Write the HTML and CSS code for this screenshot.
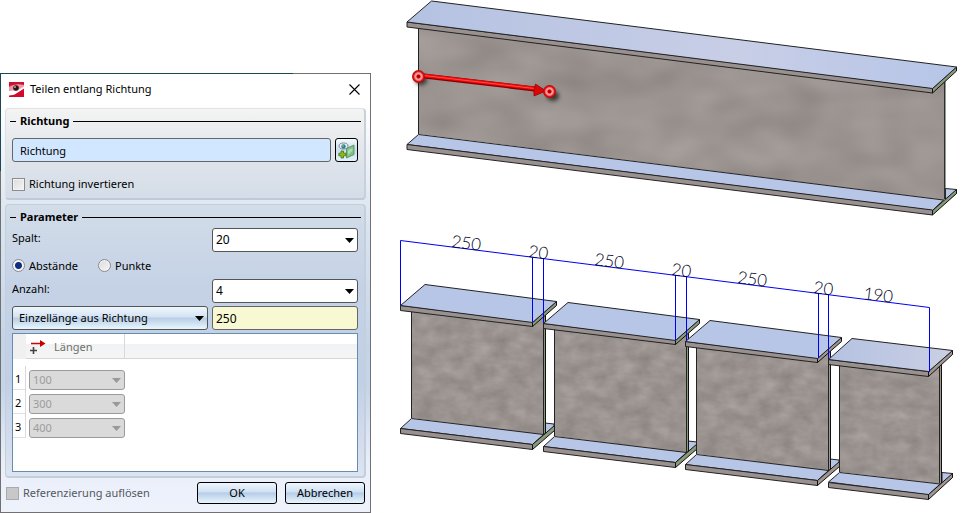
FILE: index.html
```html
<!DOCTYPE html>
<html lang="de">
<head>
<meta charset="utf-8">
<title>Teilen entlang Richtung</title>
<link rel="stylesheet" href="styles.css">
</head>
<body>
<main class="page">
  <form class="dialog" aria-labelledby="dialog-title">
    <header class="titlebar">
      <svg class="app-icon" viewBox="0 0 15 15" aria-hidden="true">
        <rect width="15" height="15" fill="#e03a52"/>
        <path d="M0 0H15V4Q8 1 0 4Z" fill="#cf1030"/>
        <path d="M0 5Q6 1 15 3V5L6 10 0 12Z" fill="#e99aa3"/>
        <path d="M0 9Q4 8 7 9L15 4.500V6.500L5 13 0 13.500Z" fill="#fff"/>
        <path d="M0 14L6 12.500 15 7V15H0Z" fill="#d4082c"/>
        <circle cx="7" cy="6" r="2.800" fill="#2b1517"/>
        <circle cx="6" cy="5" r="1" fill="#aaa"/>
      </svg>
      <h1 class="title" id="dialog-title">Teilen entlang Richtung</h1>
      <button class="close" type="button" aria-label="Schließen">
        <svg viewBox="0 0 11 11" aria-hidden="true"><path d="M.5.5l10 10M10.500.5l-10 10" fill="none" stroke="#000" stroke-width="1.100"/></svg>
      </button>
    </header>

    <div class="content">
      <section class="group group-direction">
        <h2 class="legend">Richtung</h2>
        <div class="row pick-row">
          <input class="field field-blue" type="text" value="Richtung" aria-label="Richtung" readonly>
          <button class="pick" type="button" aria-label="Richtung wählen">
            <svg viewBox="0 0 17 17" aria-hidden="true">
              <ellipse cx="5.500" cy="4" rx="4.500" ry="3" fill="#eaf1f5" stroke="#7d8a90"/>
              <circle cx="5.500" cy="4.500" r="2.200" fill="#2d7c9c"/>
              <circle cx="5" cy="4" r="1" fill="#66b579"/>
              <path d="M8.500 6.500L16 3v9.500l-7.500 3.500z" fill="#7fc086" stroke="#4c8e57" stroke-width=".8"/>
              <path d="M10 8l4.500-2v3L10 13z" fill="#addbae"/>
              <path d="M3 9h2.500v2.200H8v2.600H5.500V16H3v-2.200H.8v-2.600H3z" fill="#8dbb1c" stroke="#477315" stroke-width=".8"/>
            </svg>
          </button>
        </div>
        <label class="option"><input class="check" type="checkbox">Richtung invertieren</label>
      </section>

      <section class="group group-params">
        <h2 class="legend">Parameter</h2>
        <div class="grid">
          <label class="caption" for="gap">Spalt:</label>
          <span class="combo"><select id="gap"><option>20</option></select></span>
          <div class="radios">
            <label class="option"><input class="radio" type="radio" name="mode" checked>Abstände</label>
            <label class="option"><input class="radio" type="radio" name="mode">Punkte</label>
          </div>
          <label class="caption" for="count">Anzahl:</label>
          <span class="combo"><select id="count"><option>4</option></select></span>
        </div>
        <div class="grid">
          <span class="combo combo-blue"><select aria-label="Längenart"><option>Einzellänge aus Richtung</option></select></span>
          <input class="field field-yellow" type="text" value="250" aria-label="Einzellänge">
        </div>
        <div class="table-box">
          <table class="lengths">
            <thead>
              <tr>
                <td class="corner"></td>
                <th class="head" scope="col"><span class="head-inner">
                  <svg viewBox="0 0 16 14" aria-hidden="true"><path d="M1 3.500h10" stroke="#d60000" stroke-width="1.500"/><path d="M10 0l5.500 3.500L10 7z" fill="#c40000"/><path d="M0 10.500h7M3.500 7v7" stroke="#444" stroke-width="1.600"/></svg>
                  Längen</span></th>
                <td class="filler"></td>
              </tr>
            </thead>
            <tbody>
              <tr><th class="num" scope="row">1</th><td class="cell"><span class="combo combo-off"><select aria-label="Länge 1" disabled><option>100</option></select></span></td><td></td></tr>
              <tr><th class="num" scope="row">2</th><td class="cell"><span class="combo combo-off"><select aria-label="Länge 2" disabled><option>300</option></select></span></td><td></td></tr>
              <tr><th class="num" scope="row">3</th><td class="cell"><span class="combo combo-off"><select aria-label="Länge 3" disabled><option>400</option></select></span></td><td></td></tr>
            </tbody>
          </table>
        </div>
      </section>

      <footer class="footer">
        <label class="option option-off"><input class="check" type="checkbox" disabled>Referenzierung auflösen</label>
        <button class="action" type="submit">OK</button>
        <button class="action" type="button">Abbrechen</button>
      </footer>
    </div>
  </form>

  <svg class="drawing" viewBox="371 0 591 513" role="img" aria-label="Träger vor und nach dem Teilen">
    <defs>
      <filter id="rough" x="0" y="0" width="1" height="1" color-interpolation-filters="sRGB">
        <feTurbulence type="fractalNoise" baseFrequency=".018 .03" numOctaves="2" seed="8"/>
        <feColorMatrix values=".14 0 0 0 .536  .14 0 0 0 .505  .14 0 0 0 .49  0 0 0 0 1"/>
        <feComposite in2="SourceGraphic" operator="in"/>
      </filter>
      <filter id="grain" x="0" y="0" width="1" height="1" color-interpolation-filters="sRGB">
        <feTurbulence type="fractalNoise" baseFrequency=".055 .09" numOctaves="3" seed="3"/>
        <feColorMatrix values=".15 0 0 0 .53  .15 0 0 0 .5  .15 0 0 0 .485  0 0 0 0 1"/>
        <feComposite in2="SourceGraphic" operator="in"/>
      </filter>
      <linearGradient id="sheen"><stop offset="0" stop-color="#b4c2e2"/><stop offset=".6" stop-color="#c8cee6"/><stop offset="1" stop-color="#b6c5e8"/></linearGradient>
      <linearGradient id="sheen-end"><stop offset="0" stop-color="#b4c2e2"/><stop offset="1" stop-color="#cacfe3"/></linearGradient>
      <radialGradient id="ball"><stop offset="0" stop-color="#900"/><stop offset=".25" stop-color="#c00"/><stop offset=".4" stop-color="#ffb0b0"/><stop offset=".6" stop-color="#f77"/><stop offset=".75" stop-color="#e01515"/><stop offset="1" stop-color="#a80808"/></radialGradient>
      <filter id="shade" x="-1" y="-1" width="3" height="3"><feGaussianBlur stdDeviation="2"/></filter>
      <g id="segment">
        <path class="blue" d="M545 423l9 1v4l-9 8z"/>
        <path class="end" d="M543.500 308h2v125l-2 2z"/>
        <path filter="url(#grain)" d="M411 308l132 2V435l-132-17z"/>
        <path class="line" d="M411.500 311V418M543.500 317V434"/>
        <path class="blue" d="M411.500 418.500l132 16-11 10-132-16z"/>
        <path class="steel" d="M400.500 428.500v5l132 16v-5z"/>
        <path class="end" d="M532.500 444.500l22-19v5l-22 19z"/>
        <path class="steel" d="M400.500 305.500v5l132 16v-5z"/>
        <path class="end" d="M532.500 322.500l24-21v4l-24 21z"/>
        <path class="blue" d="M425 284.500l131.500 17-24 21-132-17z"/>
      </g>
    </defs>

    <g class="long-beam">
      <path class="blue" d="M945.500 188.500l11 1v4l-11 8z"/>
      <path class="web-edge" d="M944.500 76V199"/>
      <path filter="url(#rough)" d="M418 26l526 50V200l-526-66z"/>
      <path class="line" d="M418.500 28V134"/>
      <path class="blue" d="M418.500 134.500l525 65.500-11 10.500-525.500-66z"/>
      <path class="steel" d="M407 144.500v5l525.500 65.500v-5z"/>
      <path class="end" d="M932.500 210.500l24-21v4l-24 21.500z"/>
      <path class="steel" d="M407 22v5l525.500 66v-5z"/>
      <path class="end" d="M932.500 88.500l24-21.500v4l-24 22z"/>
      <path class="blue sheen" d="M431.500 1l525 66-24 21.500-525.500-66.500z"/>
    </g>

    <g>
      <ellipse cx="421" cy="80" rx="6" ry="5" opacity=".65" filter="url(#shade)"/>
      <ellipse cx="553" cy="96" rx="6" ry="5" opacity=".65" filter="url(#shade)"/>
      <path d="M424 76l115 13.500" stroke="#850000" stroke-width="5"/>
      <path d="M424 75.500l115 13.500" stroke="#f00606" stroke-width="3.500"/>
      <path d="M424 75.500l115 13.500" stroke="#ff4d4d" stroke-width="1"/>
      <path d="M535.500 84L546 91l-12 5q-1-6 1.500-12z" fill="#df0505" stroke="#8a0000" stroke-width=".7"/>
      <circle cx="418.500" cy="76.500" r="6.500" fill="url(#ball)"/>
      <circle cx="549.500" cy="91.500" r="6.500" fill="url(#ball)"/>
    </g>

    <use class="cut-green" href="#segment"/>
    <use class="cut-green" href="#segment" x="143" y="18"/>
    <use class="cut-steel" href="#segment" x="285" y="36"/>
    <g class="cut-steel">
      <path class="blue" d="M942 472.500l10.500 1v4l-10.500 8z"/>
      <path class="end" d="M939.500 360h2v123l-2 2z"/>
      <path filter="url(#grain)" d="M839 362h101V484l-101-12z"/>
      <path class="line" d="M839.500 365V472M939.500 366V483"/>
      <path class="blue" d="M839.500 472.500l100.500 11.500-11.500 11-100-13z"/>
      <path class="steel" d="M828.500 482.500v5l100 12v-5z"/>
      <path class="end" d="M928.500 494.500l24-21v4l-24 22z"/>
      <path class="steel" d="M828.500 359.500v5l100 12v-5z"/>
      <path class="end" d="M928.500 371.500l24-21v4l-24 22z"/>
      <path class="blue sheen-end" d="M852 338.500l100.500 12-24 21-100-12z"/>
    </g>

    <path class="dim" d="M400.500 305V240.500L929.500 307.500V372M532.500 322V257.500M543.500 323V258.500M675.500 340V275.500M686.500 341V276.500M818.500 358V293.500M828.500 359V294.500"/>
    <g class="numbers">
      <text transform="translate(451 247) rotate(7)">250</text>
      <text transform="translate(528 257) rotate(7)">20</text>
      <text transform="translate(594 265) rotate(7)">250</text>
      <text transform="translate(671 275) rotate(7)">20</text>
      <text transform="translate(737 283) rotate(7)">250</text>
      <text transform="translate(813 293) rotate(7)">20</text>
      <text transform="translate(863 299) rotate(7)">190</text>
    </g>
  </svg>
</main>
</body>
</html>
```
FILE: styles.css
```css
* { box-sizing: border-box; }

body {
  margin: 0;
  background: #fff;
  color: #000;
  font: 11px/16px "Noto Sans", "Open Sans", sans-serif;
}

button, input, select { font: inherit; color: inherit; margin: 0; }

.page {
  display: grid;
  grid-template-columns: 371px minmax(0, 1fr);
  align-items: start;
}

.drawing { display: block; width: 100%; height: auto; }

/* Dialog frame */
.dialog {
  margin-top: 73px;
  padding: 1px;
  background:
    linear-gradient(90deg, #1d4757 293px, #707070 293px) top / 100% 1px no-repeat,
    linear-gradient(#1d4757 98px, #707070 98px) left / 1px 100% no-repeat,
    #737073;
}

.titlebar {
  display: flex;
  align-items: center;
  height: 30px;
  padding: 0 10px 0 8px;
  background: #fff;
}

.app-icon { width: 15px; height: 15px; }

.title { flex: 1; margin: 0 0 0 6px; font-size: 11px; font-weight: 400; }

.close { display: grid; padding: 0; border: 0; background: none; }
.close svg { width: 11px; height: 11px; }

.content {
  padding: 4px 4px 8px;
  background: linear-gradient(#fff, #dce7f2 26%, #c3d3e8 60%, #c5d5ea 70%, #e9effa 88%, #eef2fb);
}

/* Groups */
.group {
  padding: 4px 6px;
  border: 1px solid #c5cedb;
  border-right-width: 2px;
  border-bottom-width: 2px;
  border-radius: 4px;
}

.group-direction {
  margin-bottom: 4px;
  padding-bottom: 6px;
  border-color: #dfe3e5 #c8d0da #c0cad6 #dce1e5;
  background: linear-gradient(#f3f4f3, #e3e6ec 45%, #d4dde8);
}

.group-params {
  background: linear-gradient(#d2dde8, #c5d2e6 30%, #c1d0e6 65%, #dde4f1);
}

.legend {
  display: flex;
  align-items: center;
  gap: 4px;
  margin: 0 -3px 0 -2px;
  font-size: 11px;
  line-height: 16px;
}
.legend::before, .legend::after { content: ""; height: 1px; background: #000; }
.legend::before { width: 6px; }
.legend::after { flex: 1; }

.row { display: flex; gap: 4px; }
.pick-row { margin: 9px 0 14px; }

.field {
  flex: 1;
  width: 100%;
  min-width: 0;
  height: 24px;
  padding: 0 3px;
  border: 1px solid #666;
  border-radius: 3px;
}
.field-blue { padding-left: 7px; background: #d1e7ff; }
.field-yellow { background: #f8f9d2; font-size: 12px; }

.pick {
  display: grid;
  place-items: center;
  width: 23px;
  height: 24px;
  padding: 0;
  border: 1px solid #000;
  border-radius: 3px;
  background: linear-gradient(#f4f9fd, #c9dcf0 50%, #e5f2fb);
}
.pick svg { width: 17px; height: 17px; }

.option { display: flex; align-items: center; gap: 4px; }

.check, .radio {
  appearance: none;
  flex: none;
  width: 13px;
  height: 13px;
  border: 1px solid #8c8c8c;
  background: linear-gradient(135deg, #dcdcdc, #f5f5f5);
  box-shadow: inset 0 0 0 1px #f3f3f3;
}
.radio { border-radius: 50%; }
.radio:checked { background: radial-gradient(circle, #112d80 3px, #f4f4f4 4px); }
.check:disabled { border-color: #aaa; background: #c8c8c8; box-shadow: none; }

/* Parameter form */
.grid {
  display: grid;
  grid-template-columns: minmax(0, 1fr) 146px;
  column-gap: 4px;
  align-items: center;
  margin: 3px 0;
}

.caption { align-self: start; padding-top: 2px; }
.radios { grid-column: 1 / -1; display: flex; gap: 20px; height: 27px; align-items: center; }

.combo { position: relative; display: block; }
.combo select {
  appearance: none;
  display: block;
  width: 100%;
  height: 24px;
  padding: 0 20px 0 3px;
  border: 1px solid #555;
  border-radius: 3px;
  background: #fff;
  font-size: 12px;
}
.combo::after {
  content: "";
  position: absolute;
  top: calc(50% - 2px);
  right: 4px;
  width: 9px;
  height: 5px;
  background: #000;
  clip-path: polygon(0 0, 100% 0, 50% 100%);
  pointer-events: none;
}
.combo-blue select {
  padding-left: 6px;
  background: linear-gradient(#eff7fd, #d3e2f2 46%, #b7cce6 50%, #e8f8fd);
  font-size: 11px;
}
.combo-off select {
  height: 20px;
  border-color: #9b9b9b;
  background: #dadada;
  color: #9c9c9c;
  font-size: 11px;
  opacity: 1;
}
.combo-off::after { background: #999; }

/* Lengths table */
.table-box {
  min-height: 139px;
  border: 1px solid #688caf;
  background: #fff;
}
.lengths { width: 100%; border-collapse: separate; border-spacing: 0; table-layout: fixed; }
.lengths td, .lengths th { padding: 0; font-weight: 400; text-align: left; }
.lengths thead td, .lengths thead th {
  height: 25px;
  border-bottom: 1px solid #d5d5d5;
  background: linear-gradient(#fff 40%, #f1f2f3 42%, #f5f5f6);
}
.lengths .corner { width: 13px; background: #f0f0f0; border-color: #f0f0f0; }
.lengths .head { width: 99px; border-right: 1px solid #d9d9d9; }
.head-inner { display: flex; align-items: center; gap: 8px; padding: 2px 0 0 4px; color: #6f716c; }
.head-inner svg { width: 16px; height: 14px; }
.lengths tbody::before { content: ""; display: block; height: 7px; }
.lengths .num {
  height: 24px;
  border-right: 1px solid #d9d9d9;
  border-bottom: 1px solid #e2e2e2;
  padding: 2px 0 0 2px;
}
.cell .combo { margin: 4px 0 0 3px; }

/* Footer */
.footer { display: flex; align-items: center; gap: 8px; padding: 4px 1px 0 1px; }
.footer .option { flex: 1; }
.option-off { color: #55585e; }
.action {
  width: 80px;
  height: 22px;
  padding: 0;
  border: 1px solid #000;
  border-radius: 3px;
  background: linear-gradient(#eef6fd, #d0e1f3 44%, #b6cce7 50%, #e8f7fd);
}

/* Model drawing */
.drawing path { stroke-linejoin: round; }
.blue { fill: #b7c5e6; stroke: #222; }
.sheen { fill: url(#sheen); }
.sheen-end { fill: url(#sheen-end); }
.steel { fill: #999190; stroke: #222; }
.end { fill: currentColor; stroke: #111; }
.line { fill: none; stroke: #222; }
.web-edge { fill: none; stroke: #2c322a; stroke-width: 2px; }
.long-beam, .cut-green { color: #87997a; }
.cut-steel { color: #a09691; }
.dim { fill: none; stroke: #0000f0; }
.numbers { font: 300 17px Lato, sans-serif; fill: #000020; }
```
